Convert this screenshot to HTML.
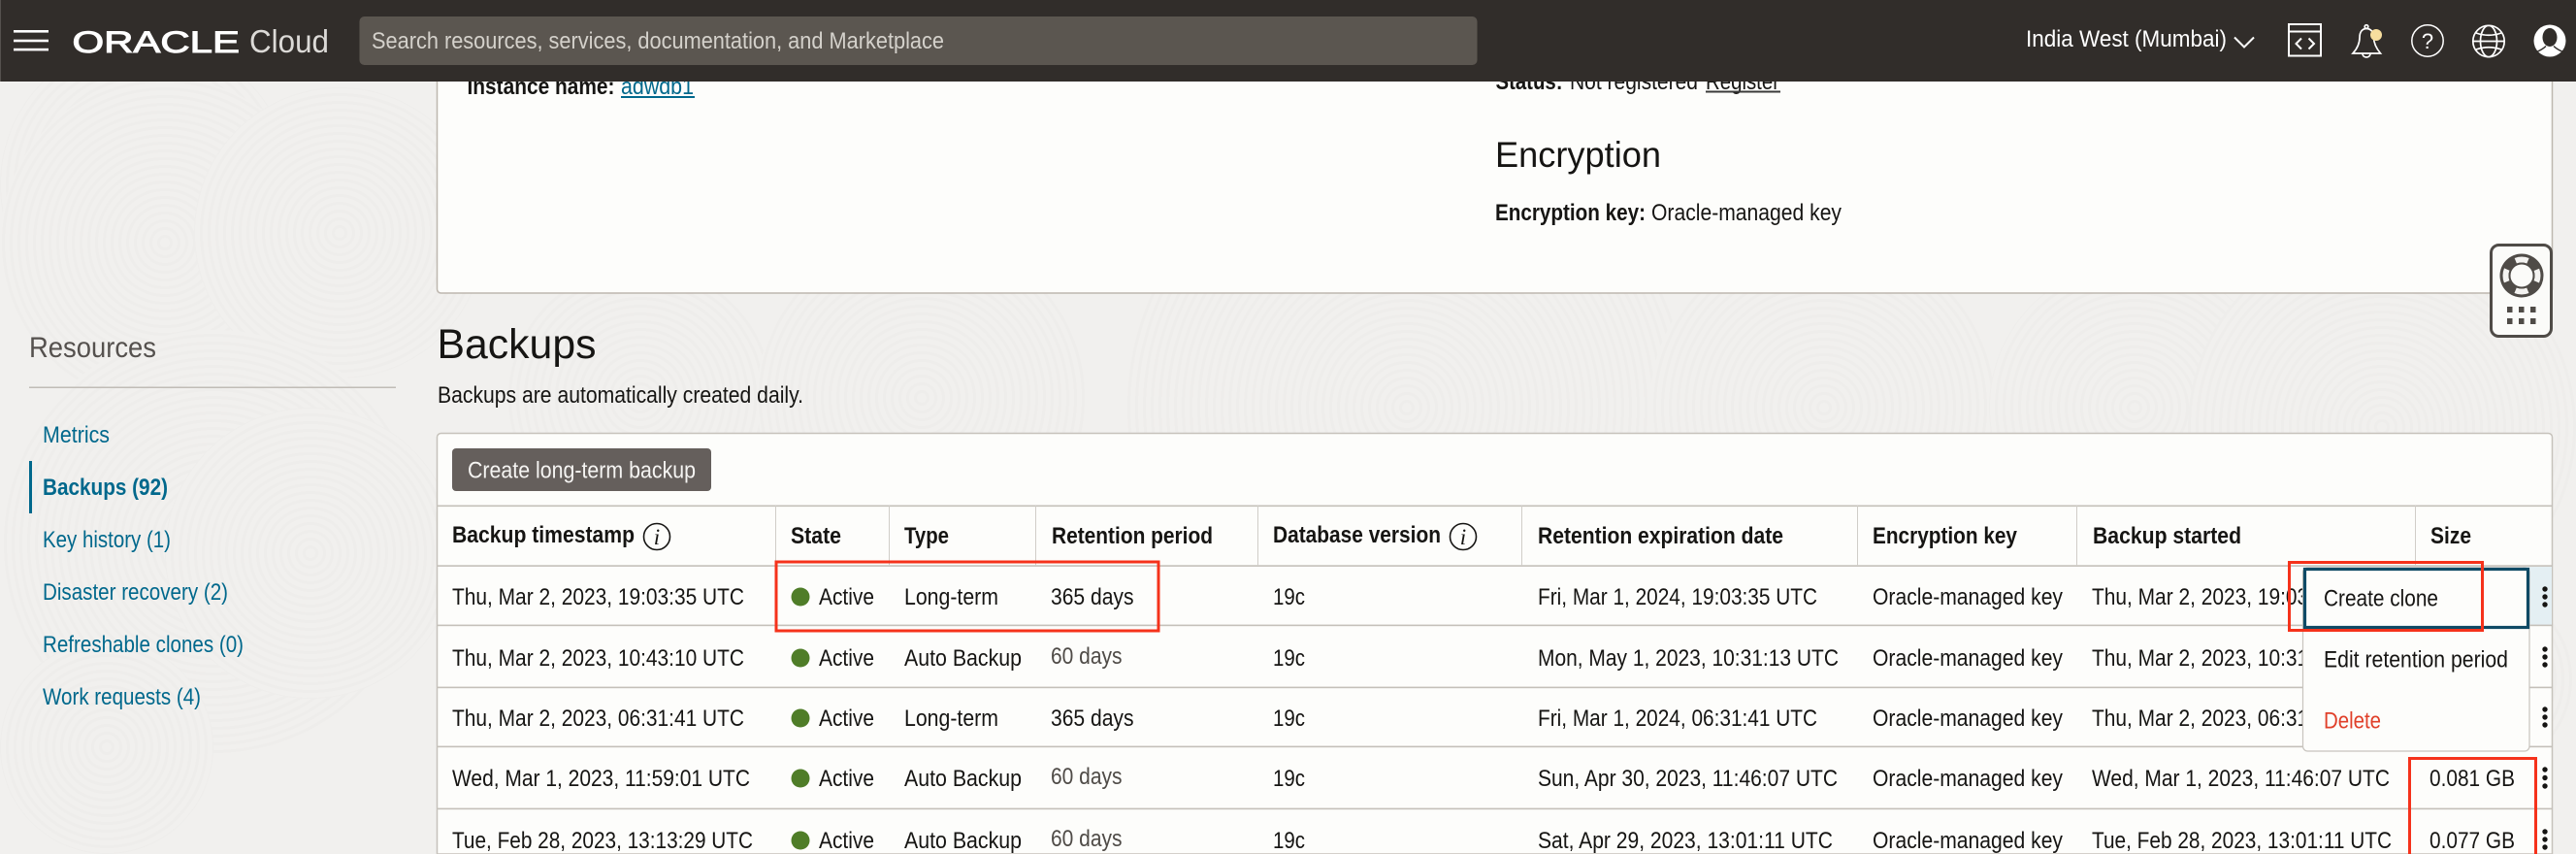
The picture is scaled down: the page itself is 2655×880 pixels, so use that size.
<!DOCTYPE html>
<html lang="en">
<head>
<meta charset="utf-8">
<title>Backups</title>
<style>
html,body{margin:0;padding:0;width:2655px;height:880px;overflow:hidden;background:#f1f0ee}
#w{position:relative;width:2655px;height:880px;overflow:hidden;background:#f1f0ee}
.sw{position:absolute;border-radius:50%;background:repeating-radial-gradient(circle,#f1f0ee 0 5px,#eeedeb 5px 8px)}
svg{position:absolute;left:0;top:0;display:block}
text{font-family:"Liberation Sans",Arial,sans-serif;font-size:24px;fill:#161513;white-space:pre}
.b{font-weight:700}
.l{fill:#00688c}
.g{fill:#4f4b47}
</style>
</head>
<body>
<div id="w">
<div class="sw" style="left:0;top:40px;width:300px;height:300px"></div>
<div class="sw" style="left:0;top:80px;width:340px;height:340px"></div>
<div class="sw" style="left:200px;top:90px;width:300px;height:300px"></div>
<div class="sw" style="left:0;top:340px;width:440px;height:440px"></div>
<div class="sw" style="left:170px;top:420px;width:300px;height:300px"></div>
<div class="sw" style="left:0;top:660px;width:220px;height:220px"></div>
<div class="sw" style="left:520px;top:270px;width:280px;height:280px"></div>
<div class="sw" style="left:780px;top:240px;width:340px;height:340px"></div>
<div class="sw" style="left:1160px;top:130px;width:580px;height:580px"></div>
<div class="sw" style="left:1700px;top:240px;width:360px;height:360px"></div>
<div class="sw" style="left:2050px;top:270px;width:300px;height:300px"></div>
<div class="sw" style="left:2255px;top:240px;width:400px;height:400px"></div>
<div class="sw" style="left:2455px;top:600px;width:200px;height:200px"></div>

<svg width="2655" height="880" viewBox="0 0 2655 880" xmlns="http://www.w3.org/2000/svg">
  <!-- top card -->
  <rect x="450.5" y="40" width="2180" height="262" rx="4" fill="#fdfdfb" stroke="#bdb7af" stroke-width="1.5"/>
  <text x="481.5" y="97" class="b" textLength="152" lengthAdjust="spacingAndGlyphs">Instance name:</text>
  <text x="640" y="97" class="l" textLength="75" lengthAdjust="spacingAndGlyphs">adwdb1</text>
  <rect x="640" y="99" width="76" height="2" fill="#00688c"/>
  <text x="1541.5" y="92" class="b" textLength="69" lengthAdjust="spacingAndGlyphs">Status:</text>
  <text x="1618" y="92" textLength="132" lengthAdjust="spacingAndGlyphs">Not registered</text>
  <text x="1758" y="92" textLength="76" lengthAdjust="spacingAndGlyphs" fill="#3a3a3a">Register</text>
  <rect x="1758" y="93.5" width="77" height="2" fill="#3a3a3a"/>
  <text x="1541" y="172" style="font-size:37px" textLength="171" lengthAdjust="spacingAndGlyphs">Encryption</text>
  <text x="1541" y="227" class="b" textLength="155" lengthAdjust="spacingAndGlyphs">Encryption key:</text>
  <text x="1702" y="227" textLength="196" lengthAdjust="spacingAndGlyphs">Oracle-managed key</text>

  <!-- sidebar -->
  <text x="30" y="368" style="font-size:30px;fill:#55514e" textLength="131" lengthAdjust="spacingAndGlyphs">Resources</text>
  <rect x="30" y="398.5" width="378" height="1.5" fill="#c0bcb6"/>
  <rect x="30" y="475" width="3" height="54" fill="#00688c"/>
  <text x="44" y="456" class="l" textLength="69" lengthAdjust="spacingAndGlyphs">Metrics</text>
  <text x="44" y="510" class="l b" textLength="129" lengthAdjust="spacingAndGlyphs">Backups (92)</text>
  <text x="44" y="564" class="l" textLength="132" lengthAdjust="spacingAndGlyphs">Key history (1)</text>
  <text x="44" y="618" class="l" textLength="191" lengthAdjust="spacingAndGlyphs">Disaster recovery (2)</text>
  <text x="44" y="672" class="l" textLength="207" lengthAdjust="spacingAndGlyphs">Refreshable clones (0)</text>
  <text x="44" y="726" class="l" textLength="163" lengthAdjust="spacingAndGlyphs">Work requests (4)</text>

  <!-- heading -->
  <text x="450.5" y="369" style="font-size:43px" textLength="164" lengthAdjust="spacingAndGlyphs">Backups</text>
  <text x="451" y="415" textLength="377" lengthAdjust="spacingAndGlyphs">Backups are automatically created daily.</text>

  <!-- table card -->
  <path d="M450.5 880V450.5a4 4 0 0 1 4-4H2626.5a4 4 0 0 1 4 4V880Z" fill="#fdfdfb" stroke="#c6c2bb" stroke-width="1.5"/>
  <rect x="466" y="462" width="267" height="44" rx="4" fill="#655f5c"/>
  <text x="482" y="492.5" style="fill:#f5f4f2" textLength="235" lengthAdjust="spacingAndGlyphs">Create long-term backup</text>

  <!-- highlight -->
  <rect x="2600" y="584" width="30" height="60" fill="#e4eff3"/>

  <!-- lines -->
  <g fill="#c4c0b9">
    <rect x="451" y="520.5" width="2180" height="1.6"/>
    <rect x="451" y="582.3" width="2180" height="1.6"/>
    <rect x="451" y="643.6" width="2180" height="1.6"/>
    <rect x="451" y="707.6" width="2180" height="1.6"/>
    <rect x="451" y="768.6" width="2180" height="1.6"/>
    <rect x="451" y="832.6" width="2180" height="1.6"/>
  </g>
  <g fill="#d0cdc8">
    <rect x="799" y="521" width="1" height="62"/>
    <rect x="916" y="521" width="1" height="62"/>
    <rect x="1067" y="521" width="1" height="62"/>
    <rect x="1296" y="521" width="1" height="62"/>
    <rect x="1568" y="521" width="1" height="62"/>
    <rect x="1914" y="521" width="1" height="62"/>
    <rect x="2140" y="521" width="1" height="62"/>
    <rect x="2489" y="521" width="1" height="62"/>
  </g>

  <!-- header row -->
  <text x="466" y="559" class="b" textLength="188" lengthAdjust="spacingAndGlyphs">Backup timestamp</text>
  <circle cx="677" cy="553" r="13.5" fill="none" stroke="#161513" stroke-width="1.6"/>
  <text x="677" y="561" text-anchor="middle" style="font-family:'Liberation Serif',serif;font-style:italic;font-size:23px">i</text>
  <text x="815" y="560" class="b" textLength="52" lengthAdjust="spacingAndGlyphs">State</text>
  <text x="932" y="560" class="b" textLength="46" lengthAdjust="spacingAndGlyphs">Type</text>
  <text x="1084" y="560" class="b" textLength="166" lengthAdjust="spacingAndGlyphs">Retention period</text>
  <text x="1312" y="559" class="b" textLength="173" lengthAdjust="spacingAndGlyphs">Database version</text>
  <circle cx="1508" cy="553" r="13.5" fill="none" stroke="#161513" stroke-width="1.6"/>
  <text x="1508" y="561" text-anchor="middle" style="font-family:'Liberation Serif',serif;font-style:italic;font-size:23px">i</text>
  <text x="1585" y="560" class="b" textLength="253" lengthAdjust="spacingAndGlyphs">Retention expiration date</text>
  <text x="1930" y="560" class="b" textLength="149" lengthAdjust="spacingAndGlyphs">Encryption key</text>
  <text x="2157" y="560" class="b" textLength="153" lengthAdjust="spacingAndGlyphs">Backup started</text>
  <text x="2505" y="560" class="b" textLength="42" lengthAdjust="spacingAndGlyphs">Size</text>

  <!-- row 1 -->
  <text x="466" y="623" textLength="301" lengthAdjust="spacingAndGlyphs">Thu, Mar 2, 2023, 19:03:35 UTC</text>
  <circle cx="825" cy="615" r="9.5" fill="#4f7d28"/>
  <text x="844" y="623" textLength="57" lengthAdjust="spacingAndGlyphs">Active</text>
  <text x="932" y="623" textLength="97" lengthAdjust="spacingAndGlyphs">Long-term</text>
  <text x="1083" y="623" textLength="85.5" lengthAdjust="spacingAndGlyphs">365 days</text>
  <text x="1312" y="623" textLength="33" lengthAdjust="spacingAndGlyphs">19c</text>
  <text x="1585" y="623" textLength="288" lengthAdjust="spacingAndGlyphs">Fri, Mar 1, 2024, 19:03:35 UTC</text>
  <text x="1930" y="623" textLength="196" lengthAdjust="spacingAndGlyphs">Oracle-managed key</text>
  <text x="2156" y="623" textLength="301" lengthAdjust="spacingAndGlyphs">Thu, Mar 2, 2023, 19:03:35 UTC</text>

  <!-- row 2 -->
  <text x="466" y="686" textLength="301" lengthAdjust="spacingAndGlyphs">Thu, Mar 2, 2023, 10:43:10 UTC</text>
  <circle cx="825" cy="678" r="9.5" fill="#4f7d28"/>
  <text x="844" y="686" textLength="57" lengthAdjust="spacingAndGlyphs">Active</text>
  <text x="932" y="686" textLength="121" lengthAdjust="spacingAndGlyphs">Auto Backup</text>
  <text x="1083" y="684" class="g" textLength="73.5" lengthAdjust="spacingAndGlyphs">60 days</text>
  <text x="1312" y="686" textLength="33" lengthAdjust="spacingAndGlyphs">19c</text>
  <text x="1585" y="686" textLength="310" lengthAdjust="spacingAndGlyphs">Mon, May 1, 2023, 10:31:13 UTC</text>
  <text x="1930" y="686" textLength="196" lengthAdjust="spacingAndGlyphs">Oracle-managed key</text>
  <text x="2156" y="686" textLength="301" lengthAdjust="spacingAndGlyphs">Thu, Mar 2, 2023, 10:31:13 UTC</text>

  <!-- row 3 -->
  <text x="466" y="748" textLength="301" lengthAdjust="spacingAndGlyphs">Thu, Mar 2, 2023, 06:31:41 UTC</text>
  <circle cx="825" cy="740" r="9.5" fill="#4f7d28"/>
  <text x="844" y="748" textLength="57" lengthAdjust="spacingAndGlyphs">Active</text>
  <text x="932" y="748" textLength="97" lengthAdjust="spacingAndGlyphs">Long-term</text>
  <text x="1083" y="748" textLength="85.5" lengthAdjust="spacingAndGlyphs">365 days</text>
  <text x="1312" y="748" textLength="33" lengthAdjust="spacingAndGlyphs">19c</text>
  <text x="1585" y="748" textLength="288" lengthAdjust="spacingAndGlyphs">Fri, Mar 1, 2024, 06:31:41 UTC</text>
  <text x="1930" y="748" textLength="196" lengthAdjust="spacingAndGlyphs">Oracle-managed key</text>
  <text x="2156" y="748" textLength="301" lengthAdjust="spacingAndGlyphs">Thu, Mar 2, 2023, 06:31:41 UTC</text>

  <!-- row 4 -->
  <text x="466" y="810" textLength="307" lengthAdjust="spacingAndGlyphs">Wed, Mar 1, 2023, 11:59:01 UTC</text>
  <circle cx="825" cy="802" r="9.5" fill="#4f7d28"/>
  <text x="844" y="810" textLength="57" lengthAdjust="spacingAndGlyphs">Active</text>
  <text x="932" y="810" textLength="121" lengthAdjust="spacingAndGlyphs">Auto Backup</text>
  <text x="1083" y="808" class="g" textLength="73.5" lengthAdjust="spacingAndGlyphs">60 days</text>
  <text x="1312" y="810" textLength="33" lengthAdjust="spacingAndGlyphs">19c</text>
  <text x="1585" y="810" textLength="309" lengthAdjust="spacingAndGlyphs">Sun, Apr 30, 2023, 11:46:07 UTC</text>
  <text x="1930" y="810" textLength="196" lengthAdjust="spacingAndGlyphs">Oracle-managed key</text>
  <text x="2156" y="810" textLength="307" lengthAdjust="spacingAndGlyphs">Wed, Mar 1, 2023, 11:46:07 UTC</text>
  <text x="2504" y="810" textLength="88" lengthAdjust="spacingAndGlyphs">0.081 GB</text>

  <!-- row 5 -->
  <text x="466" y="874" textLength="310" lengthAdjust="spacingAndGlyphs">Tue, Feb 28, 2023, 13:13:29 UTC</text>
  <circle cx="825" cy="866" r="9.5" fill="#4f7d28"/>
  <text x="844" y="874" textLength="57" lengthAdjust="spacingAndGlyphs">Active</text>
  <text x="932" y="874" textLength="121" lengthAdjust="spacingAndGlyphs">Auto Backup</text>
  <text x="1083" y="872" class="g" textLength="73.5" lengthAdjust="spacingAndGlyphs">60 days</text>
  <text x="1312" y="874" textLength="33" lengthAdjust="spacingAndGlyphs">19c</text>
  <text x="1585" y="874" textLength="304" lengthAdjust="spacingAndGlyphs">Sat, Apr 29, 2023, 13:01:11 UTC</text>
  <text x="1930" y="874" textLength="196" lengthAdjust="spacingAndGlyphs">Oracle-managed key</text>
  <text x="2156" y="874" textLength="309" lengthAdjust="spacingAndGlyphs">Tue, Feb 28, 2023, 13:01:11 UTC</text>
  <text x="2504" y="874" textLength="88" lengthAdjust="spacingAndGlyphs">0.077 GB</text>

  <!-- kebabs -->
  <g fill="#161513">
    <circle cx="2623" cy="607" r="2.7"/><circle cx="2623" cy="615" r="2.7"/><circle cx="2623" cy="623" r="2.7"/>
    <circle cx="2623" cy="669" r="2.7"/><circle cx="2623" cy="677" r="2.7"/><circle cx="2623" cy="685" r="2.7"/>
    <circle cx="2623" cy="731" r="2.7"/><circle cx="2623" cy="739" r="2.7"/><circle cx="2623" cy="747" r="2.7"/>
    <circle cx="2623" cy="793" r="2.7"/><circle cx="2623" cy="801.5" r="2.7"/><circle cx="2623" cy="810" r="2.7"/>
    <circle cx="2623" cy="857" r="2.7"/><circle cx="2623" cy="865" r="2.7"/><circle cx="2623" cy="873" r="2.7"/>
  </g>

  <!-- action menu -->
  <rect x="2373.5" y="585" width="233.5" height="189" rx="5" fill="#fdfdfb" stroke="#c8c4be" stroke-width="1.2"/>
  <rect x="2375.5" y="586.5" width="230" height="60" fill="#fdfdfb" stroke="#0f4a65" stroke-width="3.2"/>
  <text x="2395" y="624.5" textLength="118" lengthAdjust="spacingAndGlyphs">Create clone</text>
  <text x="2395" y="687.5" textLength="190" lengthAdjust="spacingAndGlyphs">Edit retention period</text>
  <text x="2395" y="750.5" style="fill:#e0402a" textLength="59" lengthAdjust="spacingAndGlyphs">Delete</text>

  <!-- red annotation boxes -->
  <g fill="none" stroke="#f5321b" stroke-width="3">
    <rect x="800" y="579" width="394" height="71"/>
    <rect x="2359.5" y="579.5" width="199" height="70"/>
    <path d="M2483.5 880V781.5H2613.5V880"/>
  </g>

  <!-- floating widget -->
  <rect x="2567.5" y="252.5" width="62" height="94" rx="8" fill="#fbfbf9" stroke="#4f4b47" stroke-width="3"/>
  <circle cx="2599" cy="284" r="22.5" fill="#4f4b47"/>
  <circle cx="2599" cy="284" r="16.5" fill="none" stroke="#f4f3f1" stroke-width="6" stroke-dasharray="13 12.92" stroke-dashoffset="6.5"/>
  <circle cx="2599" cy="284" r="12.5" fill="#fbfbf9" stroke="#4f4b47" stroke-width="2"/>
  <g fill="#4f4b47">
    <rect x="2584" y="316" width="5.5" height="6"/><rect x="2596" y="316" width="5.5" height="6"/><rect x="2608" y="316" width="5.5" height="6"/>
    <rect x="2584" y="328" width="5.5" height="6"/><rect x="2596" y="328" width="5.5" height="6"/><rect x="2608" y="328" width="5.5" height="6"/>
  </g>

  <!-- top header -->
  <rect x="0" y="0" width="2655" height="84" fill="#312d2a"/>
  <rect x="0" y="0" width="1" height="84" fill="#55514e"/>
  <g fill="#fff">
    <rect x="14" y="31" width="36" height="2.6"/>
    <rect x="14" y="40.7" width="36" height="2.6"/>
    <rect x="14" y="49.8" width="36" height="2.6"/>
  </g>
  <text x="74.5" y="54" style="font-size:31.5px;fill:#fff;stroke:#fff;stroke-width:1" textLength="172.5" lengthAdjust="spacingAndGlyphs">ORACLE</text>
  <text x="257" y="54" style="font-size:33px;fill:#dcdad7" textLength="82" lengthAdjust="spacingAndGlyphs">Cloud</text>
  <rect x="370.5" y="17" width="1152" height="50" rx="5" fill="#5b5650"/>
  <text x="383" y="50" style="fill:#d4d1cb" textLength="590" lengthAdjust="spacingAndGlyphs">Search resources, services, documentation, and Marketplace</text>
  <text x="2088" y="48" style="fill:#fff" textLength="207" lengthAdjust="spacingAndGlyphs">India West (Mumbai)</text>
  <path d="M2303 38.5l10 10 10-10" fill="none" stroke="#fff" stroke-width="2"/>

  <!-- code editor icon -->
  <g fill="none" stroke="#fff" stroke-width="2">
    <rect x="2359" y="25" width="33" height="32.5"/>
    <path d="M2359 32.5H2392"/>
    <path d="M2372 39.5l-5.5 5.5 5.5 5.5M2379.5 39.5l5.5 5.5-5.5 5.5"/>
  </g>
  <!-- bell icon -->
  <g fill="none" stroke="#fff" stroke-width="1.7">
    <path d="M2425 55C2430.5 49 2432 44 2432 38.5C2432 32.5 2435 29.5 2439 29.5C2443 29.5 2446.5 32.5 2446.5 38.5C2446.5 44 2448.5 49 2453.5 55Z"/>
    <circle cx="2439" cy="27.5" r="1.8"/>
    <path d="M2435 55.5a4 3.5 0 0 0 8 0"/>
  </g>
  <circle cx="2449" cy="36" r="6" fill="#f7de9e"/>
  <!-- help icon -->
  <circle cx="2502" cy="42" r="16.2" fill="none" stroke="#fff" stroke-width="1.5"/>
  <text x="2502" y="50" text-anchor="middle" style="font-size:22px;fill:#fff">?</text>
  <!-- globe icon -->
  <g fill="none" stroke="#fff" stroke-width="1.7">
    <circle cx="2565" cy="42.5" r="16.2"/>
    <ellipse cx="2565" cy="42.5" rx="8.5" ry="16.2"/>
    <path d="M2549 42.5H2581M2552 34Q2565 38.5 2578 34M2552 51Q2565 46.5 2578 51"/>
  </g>
  <!-- avatar icon -->
  <circle cx="2628" cy="42" r="16.5" fill="#fff"/>
  <ellipse cx="2628" cy="38.5" rx="7.5" ry="9.5" fill="#312d2a"/>
  <path d="M2615.5 53Q2621 50.5 2624 47.5M2632 47.5Q2635 50.5 2640.5 53" fill="none" stroke="#312d2a" stroke-width="1.5"/>
</svg>
</div>
</body>
</html>
